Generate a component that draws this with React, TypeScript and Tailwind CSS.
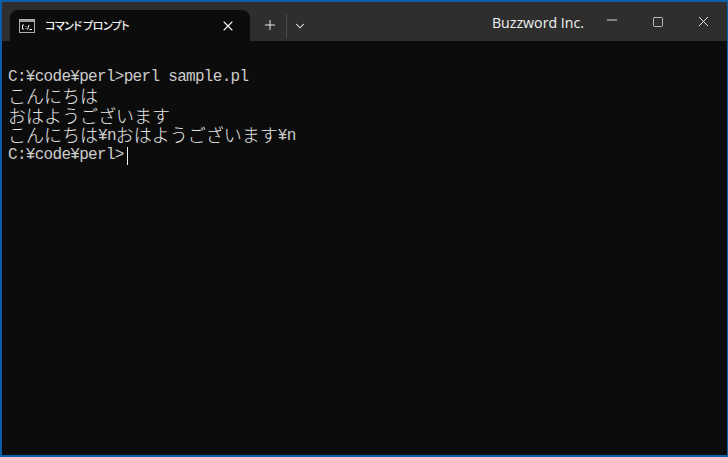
import { Minus, Plus, ChevronDown, X, Square } from 'lucide-react';

const MONO = { fontFamily: '"Liberation Mono", "Noto Sans CJK JP", monospace' };

function Ja({ children }: { children: string }) {
  return <span className="mb-[4px] text-[18px] leading-none font-[300] tracking-normal text-[#e6e6e6] [font-family:'Noto_Sans_CJK_JP',sans-serif]">{children}</span>;
}

function Row({ children }: { children: React.ReactNode }) {
  return <div className="h-[19.5px] leading-[19.5px] flex items-center">{children}</div>;
}

export default function App() {
  return (
    <div className="w-[728px] h-[457px] overflow-hidden bg-[#0c0c0c] border-t-2 border-l-2 border-r border-b-2 border-[#0a5fa8] flex flex-col">
      {/* Title bar */}
      <div className="h-[39px] shrink-0 bg-[#2e2e2e] flex items-end text-[#f2f2f2]">
        <div className="ml-[8px] w-[240px] h-[31px] bg-[#0c0c0c] rounded-t-[8px] flex items-center pl-[9px] pr-[14px]">
          <svg width="16" height="14" viewBox="0 0 16 14" className="shrink-0">
            <rect x="0.5" y="0.5" width="15" height="13" fill="#0c0c0c" stroke="#b0b0b0" />
            <rect x="1" y="1" width="14" height="2" fill="#a0a0a0" />
            <path d="M5 6H3.5V10H5M7 7v.8M7 9.2v.8M8.5 10.5L10 6M10.5 10.5H13" stroke="#f2f2f2" strokeWidth="1" fill="none" />
          </svg>
          <span className="ml-[10px] text-[11px] font-medium tracking-[-0.6px] [font-family:'Noto_Sans_CJK_JP',sans-serif] [font-feature-settings:'palt']">コマンド プロンプト</span>
          <X size={16} strokeWidth={1.6} className="ml-auto" />
        </div>
        <div className="h-[31px] flex items-center">
          <Plus size={16} strokeWidth={1.4} className="ml-[12px] mb-[1px]" />
          <div className="ml-[8px] w-px h-[24px] bg-[#4a4a4a]" />
          <ChevronDown size={14} strokeWidth={1.8} className="ml-[6px]" />
        </div>
        <div className="ml-auto h-[31px] flex items-center">
          <span className="text-[14.2px] font-medium [font-family:'Open_Sans',sans-serif] mr-[5px] -mt-[6px]">Buzzword Inc.</span>
          <div className="flex items-center -mt-[8px]">
            <div className="w-[46px] flex justify-center"><Minus size={16} strokeWidth={1.3} className="mb-[3px]" /></div>
            <div className="w-[46px] flex justify-center"><Square size={12} strokeWidth={1.4} /></div>
            <div className="w-[46px] flex justify-center"><X size={17} strokeWidth={1.3} className="mr-[1px]" /></div>
          </div>
        </div>
      </div>
      {/* Console */}
      <div className="flex-1 pt-[27px] pl-[6px] text-[16px] tracking-[-0.7px] text-[#cccccc] whitespace-pre" style={MONO}>
        <Row>C:¥code¥perl&gt;perl sample.pl</Row>
        <Row><Ja>こんにちは</Ja></Row>
        <Row><Ja>おはようございます</Ja></Row>
        <Row><Ja>こんにちは</Ja>¥n<Ja>おはようございます</Ja>¥n</Row>
        <Row>
          <span>C:¥code¥perl&gt;</span>
          <span className="ml-[3px] w-px h-[18px] bg-[#f2f2f2]" />
        </Row>
      </div>
    </div>
  );
}
